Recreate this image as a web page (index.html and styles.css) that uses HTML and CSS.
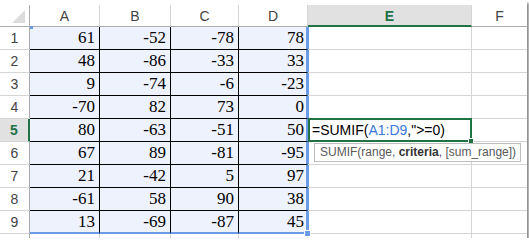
FILE: index.html
```html
<!DOCTYPE html>
<html lang="en">
<head>
  <meta charset="UTF-8">
  <title>SUMIF</title>
  <link rel="stylesheet" href="styles.css">
</head>
<body>
  <div class="window">
    <div class="sheet">
      <div class="h corner"><span class="tri"></span></div>
      <div class="h col">A</div>
      <div class="h col">B</div>
      <div class="h col">C</div>
      <div class="h col">D</div>
      <div class="h col on">E</div>
      <div class="h col">F</div>

      <div class="h row">1</div>
      <div class="c r first">61<span class="dot"></span></div><div class="c r">-52</div><div class="c r">-78</div><div class="c r d">78</div><div class="c"></div><div class="c"></div>
      <div class="h row">2</div>
      <div class="c r">48</div><div class="c r">-86</div><div class="c r">-33</div><div class="c r d">33</div><div class="c"></div><div class="c"></div>
      <div class="h row">3</div>
      <div class="c r">9</div><div class="c r">-74</div><div class="c r">-6</div><div class="c r d">-23</div><div class="c"></div><div class="c"></div>
      <div class="h row">4</div>
      <div class="c r">-70</div><div class="c r">82</div><div class="c r">73</div><div class="c r d">0</div><div class="c"></div><div class="c"></div>
      <div class="h row on">5</div>
      <div class="c r">80</div><div class="c r">-63</div><div class="c r">-51</div><div class="c r d">50</div>
      <div class="c f">=SUMIF(<span class="ref">A1:D9</span>,"&gt;=0)<span class="frame"><span class="fill"></span></span><div class="tip">SUMIF(range, <b>criteria</b>, [sum_range])</div></div>
      <div class="c"></div>
      <div class="h row">6</div>
      <div class="c r">67</div><div class="c r">89</div><div class="c r">-81</div><div class="c r d">-95</div><div class="c"></div><div class="c"></div>
      <div class="h row">7</div>
      <div class="c r">21</div><div class="c r">-42</div><div class="c r">5</div><div class="c r d">97</div><div class="c"></div><div class="c"></div>
      <div class="h row">8</div>
      <div class="c r">-61</div><div class="c r">58</div><div class="c r">90</div><div class="c r d">38</div><div class="c"></div><div class="c"></div>
      <div class="h row">9</div>
      <div class="c r last">13</div><div class="c r last">-69</div><div class="c r last">-87</div><div class="c r d last">45<span class="grip"></span></div><div class="c"></div><div class="c"></div>
      <div class="h row">10</div>
      <div class="c"></div><div class="c"></div><div class="c"></div><div class="c"></div><div class="c"></div><div class="c"></div>
    </div>
  </div>
</body>
</html>
```

FILE: styles.css
```css
body {
  margin: 0;
  background: #fff;
}

.window {
  width: 527px;
  height: 238px;
  box-sizing: border-box;
  padding-top: 5px;
  overflow: hidden;
  background: #fff;
  box-shadow: 2px 3px 2px rgba(0, 0, 0, 0.45);
}

.sheet {
  display: grid;
  grid-template-columns: 30px 70px 71px 68px 69px 164px 56px;
  grid-template-rows: 22px repeat(10, 23px);
}

.h {
  box-sizing: border-box;
  font-family: "Liberation Sans", Arial, sans-serif;
  font-size: 14px;
  color: #444;
  display: flex;
  align-items: center;
  justify-content: center;
}

.col {
  border-right: 1px solid #d5d5d5;
  border-bottom: 1px solid #ababab;
  padding-top: 1px;
}

.row {
  border-right: 1px solid #ababab;
  border-bottom: 1px solid #d5d5d5;
}

.corner {
  border-right: 1px solid #ababab;
  border-bottom: 1px solid #ababab;
  position: relative;
}

.tri {
  position: absolute;
  right: 4px;
  bottom: 3px;
  width: 0;
  height: 0;
  border-left: 13px solid transparent;
  border-bottom: 13px solid #dcdcdc;
}

.col.on {
  background: #e1e1e1;
  border-bottom: 2px solid #217346;
  color: #217346;
  font-weight: bold;
}

.row.on {
  background: #e1e1e1;
  border-right: 2px solid #217346;
  color: #217346;
  font-weight: bold;
}

.c {
  box-sizing: border-box;
  border-right: 1px solid #d4d4d4;
  border-bottom: 1px solid #d4d4d4;
  font-family: "Liberation Serif", "Times New Roman", serif;
  font-size: 17px;
  line-height: 22px;
  white-space: nowrap;
  position: relative;
}

.r {
  background: #edf2fc;
  border-right-color: #000;
  border-bottom-color: #000;
  text-align: right;
  padding-right: 4px;
  color: #000;
}

.r.d {
  border-right: 3px solid #6b9ae6;
  margin-right: -1px;
  padding-right: 2px;
}

.r.last {
  border-bottom: 2px solid #6b9ae6;
  line-height: 21px;
}

.dot {
  position: absolute;
  left: 0;
  top: -1px;
  width: 3px;
  height: 3px;
  background: #6b9ae6;
}

.grip {
  position: absolute;
  right: -5px;
  bottom: -5px;
  width: 5px;
  height: 5px;
  background: #6b9ae6;
  border: 1px solid #fff;
  z-index: 2;
}

.f {
  font-family: "Liberation Sans", Arial, sans-serif;
  font-size: 14px;
  padding-left: 4px;
  color: #000;
  z-index: 3;
}

.ref {
  color: #3c78d8;
}

.frame {
  position: absolute;
  left: 0;
  right: -1px;
  top: -1px;
  bottom: -1px;
  border: 2px solid #217346;
}

.fill {
  position: absolute;
  right: -4px;
  bottom: -4px;
  width: 4px;
  height: 4px;
  background: #217346;
  border: 1px solid #fff;
}

.tip {
  position: absolute;
  left: 6px;
  top: 100%;
  margin-top: 2px;
  width: 207px;
  height: 19px;
  box-sizing: border-box;
  border: 1px solid #bdbdbd;
  background: #fff;
  font-family: "Liberation Sans", Arial, sans-serif;
  font-size: 12px;
  line-height: 17px;
  padding-left: 5px;
  color: #595959;
}

.tip b {
  color: #333;
}
```
